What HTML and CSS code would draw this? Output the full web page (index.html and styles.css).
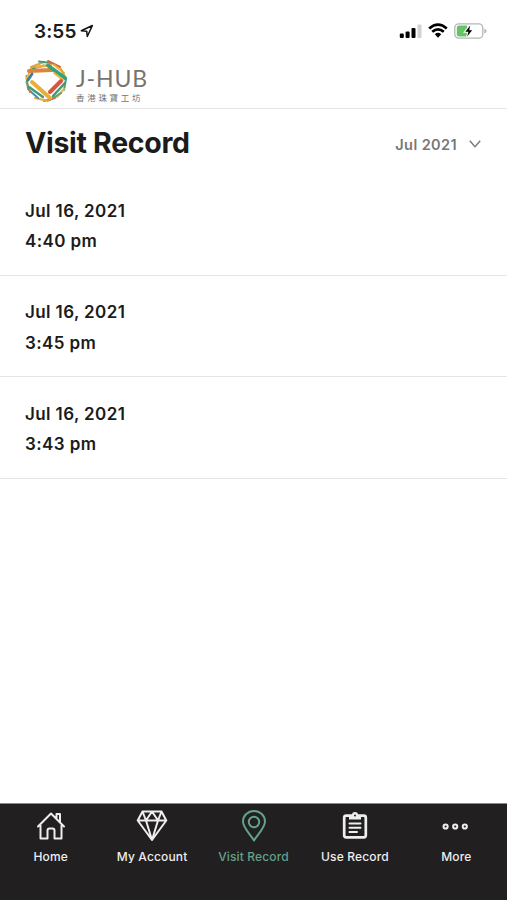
FILE: index.html
```html
<!DOCTYPE html>
<html lang="en">
<head>
  <meta charset="UTF-8">
  <title>Visit Record</title>
  <link rel="stylesheet" href="styles.css">
</head>
<body>

  <div class="status">
    <div class="clock">
      <span>3:55</span>
      <svg width="14" height="14" viewBox="0 0 14 14"><path d="M1.3 6.7 12.4 1.5 7.3 12.5 6.7 7.2Z" fill="none" stroke="#111" stroke-width="1.5" stroke-linejoin="round"/></svg>
    </div>
    <div class="signals">
      <svg width="23" height="16" viewBox="0 0 23 16">
        <rect x="0.8" y="10.5" width="4" height="4.5" rx="1"/>
        <rect x="6.6" y="8.5" width="4" height="6.5" rx="1"/>
        <rect x="12.5" y="5" width="4" height="10" rx="1"/>
        <rect x="18.5" y="1.5" width="4" height="13.5" rx="1" fill="#d2d2d2"/>
      </svg>
      <svg width="20" height="16" viewBox="0 0 20 16">
        <path d="M1.2 5.5Q10-2.2 18.8 5.5M4.2 8.8Q10 3.8 15.8 8.8" fill="none" stroke="#000" stroke-width="2.7"/>
        <path d="M6.8 11.2Q10 8.5 13.2 11.2L10 14.8Z"/>
      </svg>
      <svg width="33" height="18" viewBox="0 0 33 18">
        <rect x=".8" y="1.8" width="28" height="14.4" rx="4" fill="#fff" stroke="#b5b5b5" stroke-width="1.3"/>
        <path d="M5 3.6H13V14.4H5Q2.8 14.4 2.8 12.2V5.8Q2.8 3.6 5 3.6Z" fill="#65c466"/>
        <path d="M30.3 6.4Q32.6 7.4 32.6 9T30.3 11.6Z" fill="#b5b5b5"/>
        <path d="M16.2 3.5 11.3 9.7H14.4L13.2 14.5 18.2 8.2H15.2Z" stroke="#fff" stroke-width="2.2" paint-order="stroke"/>
      </svg>
    </div>
  </div>

  <div class="header">
    <svg class="logo" width="44" height="44" viewBox="0 0 44 44" fill="none" stroke-linecap="round">
      <g stroke-width="2">
        <path d="M7 8 20 3" stroke="#e6a13a"/>
        <path d="M15 2.5 27 4" stroke="#4b9a72"/>
        <path d="M24 2 36 8" stroke="#d8673f"/>
        <path d="M30 6 40 14" stroke="#edb33c"/>
        <path d="M7 10 20 6.5" stroke="#4b9a72"/>
        <path d="M37 10 42 20" stroke="#e0a33a"/>
        <path d="M42 20 40 31" stroke="#45a37d"/>
        <path d="M40 30 33 38" stroke="#e5b541"/>
        <path d="M37 34 26 41" stroke="#55a27a"/>
        <path d="M31 39 20 42" stroke="#dd7145"/>
        <path d="M24 42 11 39" stroke="#e4ac3c"/>
        <path d="M14 39 5 31" stroke="#488cac"/>
        <path d="M6 33 2.5 23" stroke="#dd7947"/>
        <path d="M4 30 2.5 17" stroke="#62a36c"/>
        <path d="M2.5 20 7 10" stroke="#e5b345"/>
      </g>
      <path d="M12 8 27 6" stroke="#e9ad38" stroke-width="2.5"/>
      <path d="M5 12 28 11" stroke="#df823b" stroke-width="4"/>
      <path d="M24 6.5 41 19" stroke="#39a07a" stroke-width="4"/>
      <path d="M30 14 39 21" stroke="#edb33e" stroke-width="2"/>
      <path d="M8 15 4 21" stroke="#387f9c" stroke-width="2.8"/>
      <path d="M5 28 19 38" stroke="#419978" stroke-width="2.4"/>
      <path d="M8 23 26 39" stroke="#e9ad38" stroke-width="4"/>
      <path d="M41 24 29 37" stroke="#419978" stroke-width="2.5"/>
      <path d="M37 22 26 33" stroke="#d8573b" stroke-width="4"/>
    </svg>
    <div class="brand">
      <div class="brand-name">J-HUB</div>
      <div class="brand-sub">香港珠寶工坊</div>
    </div>
  </div>

  <div class="heading">
    <h1>Visit Record</h1>
    <div class="month">
      <span>Jul 2021</span>
      <svg width="12" height="8" viewBox="0 0 12 8"><path d="M.8.8 6 6.8 11.2.8" fill="none" stroke="#777" stroke-width="1.4"/></svg>
    </div>
  </div>

  <div class="records">
    <div class="record"><div>Jul 16, 2021</div><div>4:40 pm</div></div>
    <div class="record"><div>Jul 16, 2021</div><div>3:45 pm</div></div>
    <div class="record"><div>Jul 16, 2021</div><div>3:43 pm</div></div>
  </div>

  <div class="tabs">
    <div class="tab">
      <svg width="32" height="34" viewBox="0 0 32 34">
        <path d="M3 17.5 16 4.5 29 17.5M5.5 16V29.5H12.5V21.5Q12.5 19.5 14.5 19.5H17.5Q19.5 19.5 19.5 21.5V29.5H26.5V16M21.5 9V5H25V13"/>
      </svg>
      <span>Home</span>
    </div>
    <div class="tab">
      <svg width="32" height="34" viewBox="0 0 32 34">
        <path d="M6.5 2.5H25.5L30.3 11.5 16 31 1.7 11.5ZM1.7 11.5H30.3M6.5 2.5 10 11.5 16 2.5 22 11.5 25.5 2.5M10 11.5 16 31 22 11.5"/>
      </svg>
      <span>My Account</span>
    </div>
    <div class="tab active">
      <svg width="32" height="34" viewBox="0 0 32 34">
        <path d="M16 31.5C13 26 5 19 5 12.5A11 10.5 0 0 1 27 12.5C27 19 19 26 16 31.5Z"/>
        <circle cx="16" cy="13" r="5.2"/>
      </svg>
      <span>Visit Record</span>
    </div>
    <div class="tab">
      <svg width="32" height="34" viewBox="0 0 32 34">
        <rect x="5.2" y="6.7" width="21.6" height="21.6" rx="2" stroke-width="2.7"/>
        <path class="solid" d="M10 6H13A3 3 0 0 1 19 6H22V10.5H10Z"/>
        <circle class="hole" cx="16" cy="6.6" r="1"/>
        <path d="M10.5 14.5H21.5M10.5 18.8H21.5M10.5 23H18"/>
      </svg>
      <span>Use Record</span>
    </div>
    <div class="tab">
      <svg width="32" height="34" viewBox="0 0 32 34">
        <circle cx="5.6" cy="17.5" r="2.1"/>
        <circle cx="15.2" cy="17.5" r="2.1"/>
        <circle cx="24.8" cy="17.5" r="2.1"/>
      </svg>
      <span>More</span>
    </div>
  </div>

</body>
</html>
```

FILE: styles.css
```css
* { box-sizing: border-box; }
body { margin: 0; height: 900px; display: flex; flex-direction: column; overflow: hidden; background: #fff; color: #1b1b1b; font-family: Inter, "Noto Sans CJK TC", sans-serif; }
svg { display: block; flex: none; }

.status { height: 56px; padding: 6px 20px 0 34px; display: flex; justify-content: space-between; align-items: center; }
.clock { display: flex; align-items: center; gap: 4px; font-size: 19px; font-weight: 600; letter-spacing: 0.1px; }
.signals { display: flex; align-items: center; gap: 6px; }

.header { height: 53px; padding: 3px 24px 0; display: flex; gap: 8px; border-bottom: 1px solid #e5e5e5; }
.brand { padding-top: 7px; color: #77736f; }
.brand-name { font-family: Lato, sans-serif; font-size: 23px; line-height: 25px; letter-spacing: 0.9px; }
.brand-sub { font-family: "Noto Sans CJK TC", sans-serif; font-size: 8.5px; line-height: 13px; letter-spacing: 2.7px; white-space: nowrap; }

.heading { height: 65px; padding: 1px 25px 0; display: flex; justify-content: space-between; align-items: center; }
h1 { margin: 0; font-size: 28.5px; font-weight: 700; letter-spacing: -0.3px; }
.month { display: flex; align-items: center; gap: 12px; padding: 5px 1px 0 0; color: #777; font-size: 14.5px; font-weight: 600; letter-spacing: 0.4px; }
.month svg { margin-bottom: 2px; }

.records { flex: 1; }
.record { height: 101.5px; padding: 21.5px 25px 0; border-bottom: 1px solid #e5e5e5; font-size: 17px; font-weight: 600; line-height: 30.5px; letter-spacing: 0.4px; }

.tabs { height: 97px; padding-top: 5px; display: flex; background: #211f20; border-top: 1px solid #888; }
.tab { flex: 1; display: flex; flex-direction: column; align-items: center; gap: 5px; color: #eee; font-size: 12px; font-weight: 500; line-height: 17px; letter-spacing: 0.15px; white-space: nowrap; }
.tab svg { fill: none; stroke: currentColor; stroke-width: 2; stroke-linecap: round; stroke-linejoin: round; }
.tab .solid { fill: currentColor; stroke: none; }
.tab .hole { fill: #211f20; stroke: none; }
.active { color: #64a18c; }
```
